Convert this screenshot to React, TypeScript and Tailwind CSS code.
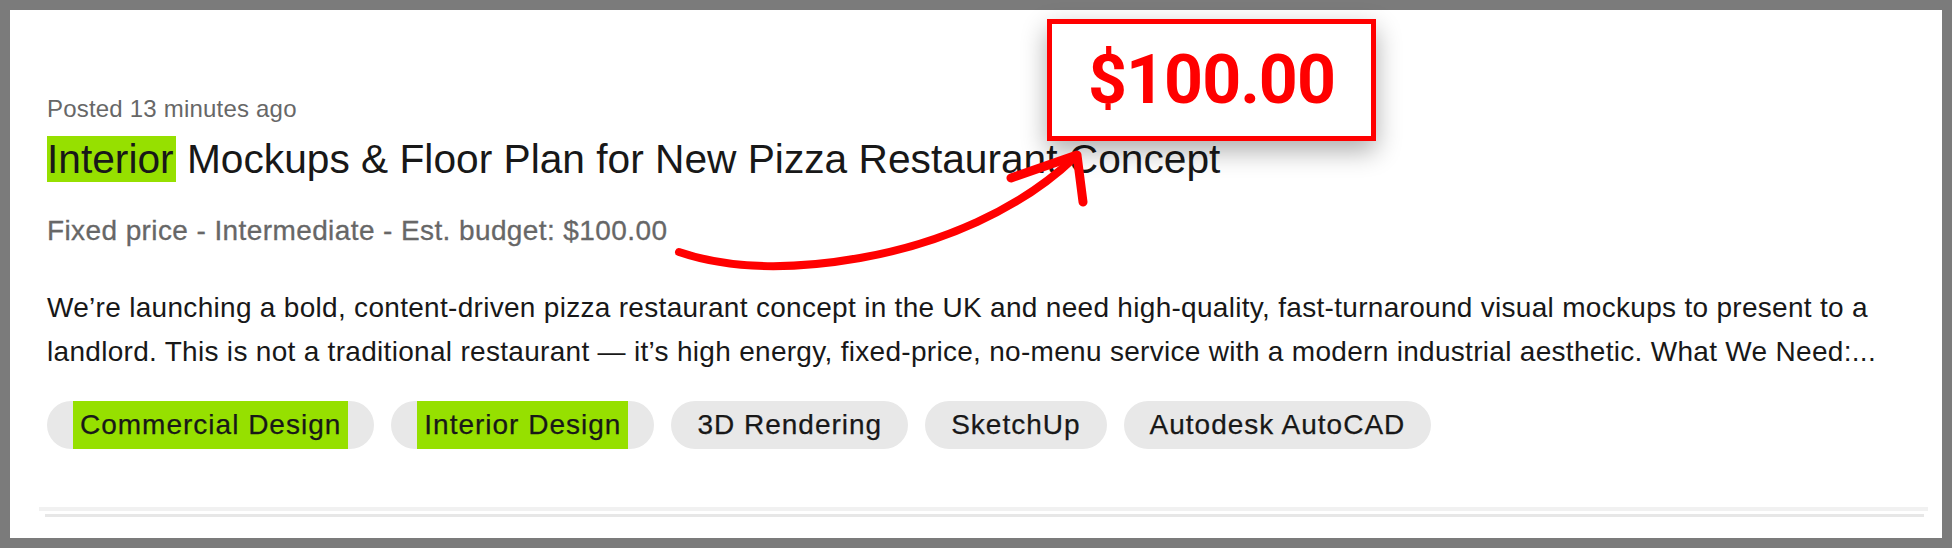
import React from "react";

const Tag = ({ label, hl }: { label: string; hl?: boolean }) => (
  <div className="h-[48px] rounded-full bg-[#e8e8e8] px-[26px] flex items-stretch text-[28px] tracking-[1px] text-[#181818] [-webkit-text-stroke:0.25px_currentColor]">
    {hl ? (
      <span className="flex items-center px-[7px] bg-[#96e000]">{label}</span>
    ) : (
      <span className="flex items-center">{label}</span>
    )}
  </div>
);

export default function App() {
  return (
    <div
      className="relative w-[1952px] h-[548px] overflow-hidden bg-[#7b7b7b] p-[10px]"
      style={{ fontFamily: '"Liberation Sans", Arial, sans-serif' }}
    >
      <div className="h-full bg-white flex flex-col">
        <div className="pl-[37px] pr-[37px] pt-[83px]">
          <p className="text-[24px] leading-[32px] tracking-[0.2px] text-[#676767]">
            Posted 13 minutes ago
          </p>
          <h2 className="mt-[10px] text-[40.7px] leading-[48px] text-[#181818]">
            <span className="bg-[#96e000] pr-[2px]">Interior</span> Mockups &amp; Floor Plan for New Pizza Restaurant Concept
          </h2>
          <p className="mt-[28px] text-[28px] leading-[40px] tracking-[0.4px] text-[#676767] [-webkit-text-stroke:0.3px_currentColor]">
            Fixed price - Intermediate - Est. budget: $100.00
          </p>
          <p className="mt-[35px] text-[28px] leading-[44px] tracking-[0.3px] text-[#181818]">
            We’re launching a bold, content-driven pizza restaurant concept in the UK and need high-quality, fast-turnaround visual mockups to present to a landlord. This is not a traditional restaurant — it’s high energy, fixed-price, no-menu service with a modern industrial aesthetic. What We Need:...
          </p>
          <div className="mt-[27px] flex gap-[17px]">
            <Tag label="Commercial Design" hl />
            <Tag label="Interior Design" hl />
            <Tag label="3D Rendering" />
            <Tag label="SketchUp" />
            <Tag label="Autodesk AutoCAD" />
          </div>
        </div>
        <div className="mt-[58px] ml-[29px] mr-[14px] h-[4px] bg-[#f1f1f1]" />
        <div className="mt-[3px] ml-[35px] mr-[18px] h-[3px] bg-[#e7e7e7]" />
      </div>

      <div className="absolute left-[1047px] top-[19px] w-[329px] h-[122px] border-[5px] border-[#ff0000] bg-white shadow-[0_10px_24px_rgba(0,0,0,0.32)] flex items-center justify-center">
        <span
          className="text-[68px] font-bold text-[#ff0000] leading-none tracking-[-1px]"
          style={{ fontFamily: 'Roboto, "Liberation Sans", sans-serif' }}
        >
          $100.00
        </span>
      </div>

      <svg
        className="absolute left-0 top-0 pointer-events-none"
        width="1952"
        height="548"
        viewBox="0 0 1952 548"
      >
        <path
          d="M679 252 C720 266 780 272 860 258 C940 244 1020 210 1075 157"
          fill="none"
          stroke="#ff0000"
          strokeWidth="8"
          strokeLinecap="round"
        />
        <path
          d="M1011 178 L1077 155 L1083 202"
          fill="none"
          stroke="#ff0000"
          strokeWidth="9"
          strokeLinecap="round"
          strokeLinejoin="round"
        />
      </svg>
    </div>
  );
}
